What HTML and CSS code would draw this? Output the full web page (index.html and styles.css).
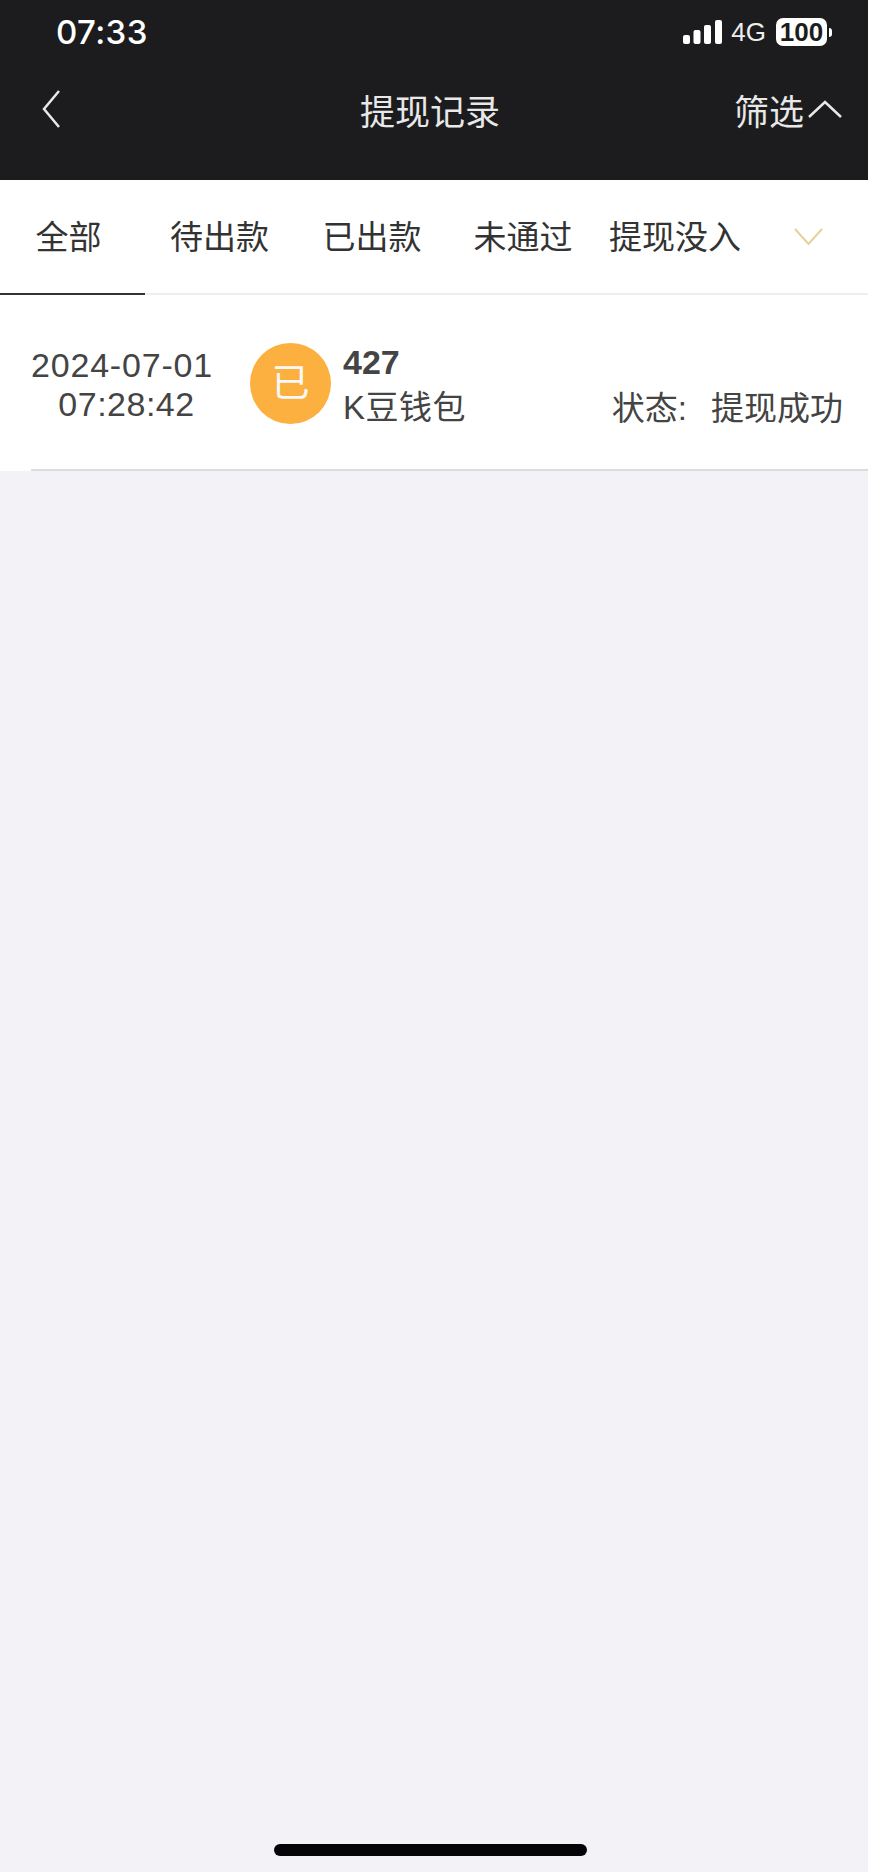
FILE: index.html
```html
<!DOCTYPE html>
<html>
<head>
    <meta charset="UTF-8">
    <title>提现记录</title>
    <link rel="stylesheet" href="styles.css">
</head>
<body>
    <div class="screen">
        <div class="header">
            <div class="status-bar">
                <span class="clock">07:33</span>
                <div class="status-icons">
                    <svg class="signal" width="39" height="24" viewBox="0 0 39 24">
                        <rect x="0" y="15" width="7" height="9" rx="2"/>
                        <rect x="10.500" y="10" width="7" height="14" rx="2"/>
                        <rect x="21" y="5" width="7" height="19" rx="2"/>
                        <rect x="32" y="0" width="7" height="24" rx="2"/>
                    </svg>
                    <span class="network">4G</span>
                    <span class="battery">100</span>
                    <span class="battery-cap"></span>
                </div>
            </div>
            <div class="nav-bar">
                <svg class="nav-back" width="18" height="38" viewBox="0 0 18 38">
                    <path d="M17 1 L2 19 L17 37"/>
                </svg>
                <span class="nav-title">提现记录</span>
                <div class="nav-filter">
                    <span>筛选</span>
                    <svg class="filter-caret" width="34" height="18" viewBox="0 0 34 18">
                        <path d="M1 17 L17 2 L33 17"/>
                    </svg>
                </div>
            </div>
        </div>

        <div class="tabs">
            <div class="tab tab-all active">全部</div>
            <div class="tab tab-pending">待出款</div>
            <div class="tab tab-paid">已出款</div>
            <div class="tab tab-rejected">未通过</div>
            <div class="tab tab-seized">提现没入</div>
            <div class="tab-more">
                <svg width="29" height="18" viewBox="0 0 29 18">
                    <path d="M1 1 L14.500 16 L28 1"/>
                </svg>
            </div>
        </div>

        <div class="record">
            <div class="record-date">
                <div>2024-07-01</div>
                <div class="record-time">07:28:42</div>
            </div>
            <div class="record-badge">已</div>
            <div class="record-info">
                <div class="record-amount">427</div>
                <div class="record-wallet">K豆钱包</div>
            </div>
            <div class="record-status"><span class="status-label">状态:</span>提现成功</div>
        </div>

        <div class="list-rest"></div>

        <div class="home-area">
            <div class="home-bar"></div>
        </div>
    </div>
</body>
</html>
```

FILE: styles.css
```css
body {
    margin: 0;
    background: #fff;
    font-family: "Liberation Sans", "Noto Sans CJK SC", sans-serif;
}

.screen {
    display: flex;
    flex-direction: column;
    width: 868px;
    height: 1872px;
    background: #f2f2f7;
}

/* header */
.header {
    height: 180px;
    background: #1c1c1e;
    color: #fff;
}
.status-bar {
    display: flex;
    justify-content: space-between;
    align-items: center;
    height: 64px;
    padding: 0 36px 0 56px;
}
.clock {
    font-family: Inter, sans-serif;
    font-size: 33px;
    font-weight: 500;
    letter-spacing: 0.4px;
}
.status-icons {
    display: flex;
    align-items: center;
}
.signal {
    fill: #fff;
}
.network {
    margin-left: 9px;
    font-size: 26px;
    color: #eee;
}
.battery {
    margin-left: 10px;
    width: 51px;
    height: 28px;
    border-radius: 7px;
    background: #fff;
    color: #1c1c1e;
    font-size: 26px;
    font-weight: bold;
    line-height: 28px;
    text-align: center;
}
.battery-cap {
    width: 3px;
    height: 9px;
    margin-left: 2px;
    border-radius: 0 3px 3px 0;
    background: #fff;
}
.nav-bar {
    display: flex;
    justify-content: space-between;
    align-items: center;
    height: 90px;
    padding: 0 26px 1px 42px;
    color: #e8e8e8;
}
.nav-back path,
.filter-caret path {
    fill: none;
    stroke: #e8e8e8;
    stroke-width: 2.500;
}
.nav-title {
    margin-left: 66px;
    font-size: 35px;
}
.nav-filter {
    display: flex;
    align-items: center;
    gap: 4px;
    font-size: 35px;
}

/* tabs */
.tabs {
    display: flex;
    height: 115px;
    background: #fff;
    border-bottom: 2px solid #eeeeee;
    box-sizing: border-box;
    font-size: 33px;
    color: #333;
}
.tab {
    display: flex;
    justify-content: center;
    align-items: center;
    margin-bottom: -2px;
    padding-bottom: 4px;
    border-bottom: 2px solid transparent;
    box-sizing: border-box;
}
.tab.active {
    border-bottom-color: #333;
}
.tab-all {
    width: 145px;
    padding-right: 8px;
}
.tab-pending {
    width: 149px;
}
.tab-paid {
    width: 156px;
}
.tab-rejected {
    width: 146px;
}
.tab-seized {
    width: 158px;
}
.tab-more {
    display: flex;
    flex: 1;
    justify-content: center;
    align-items: center;
    padding-right: 5px;
}
.tab-more path {
    fill: none;
    stroke: #e3d29c;
    stroke-width: 2;
}

/* record row */
.record {
    position: relative;
    display: flex;
    align-items: center;
    height: 176px;
    background: #fff;
    color: #444;
}
.record::after {
    content: "";
    position: absolute;
    left: 31px;
    right: 0;
    bottom: 0;
    height: 2px;
    background: #dcdce0;
}
.record-date {
    width: 181px;
    margin: 4px 0 0 31px;
    font-size: 34px;
    letter-spacing: 0.8px;
    line-height: 39px;
    text-align: center;
    white-space: nowrap;
}
.record-time {
    padding-left: 10px;
    letter-spacing: 0.5px;
}
.record-badge {
    flex-shrink: 0;
    width: 81px;
    height: 81px;
    margin-left: 38px;
    border-radius: 50%;
    background: #fcb040;
    color: #f8f8f8;
    font-size: 38px;
    line-height: 81px;
    text-align: center;
}
.record-info {
    flex: 1;
    margin: 5px 0 0 12px;
}
.record-amount {
    font-size: 34px;
    font-weight: bold;
    line-height: 44px;
}
.record-wallet {
    font-size: 33px;
    letter-spacing: 0.5px;
    line-height: 48px;
}
.record-status {
    align-self: flex-end;
    margin: 0 25px 38px 0;
    font-size: 33px;
    line-height: 48px;
}
.status-label {
    padding-right: 24px;
}

.list-rest {
    flex: 1;
}

/* home indicator */
.home-area {
    height: 28px;
    padding-left: 274px;
}
.home-bar {
    width: 313px;
    height: 12px;
    border-radius: 6px;
    background: #050508;
}
```
